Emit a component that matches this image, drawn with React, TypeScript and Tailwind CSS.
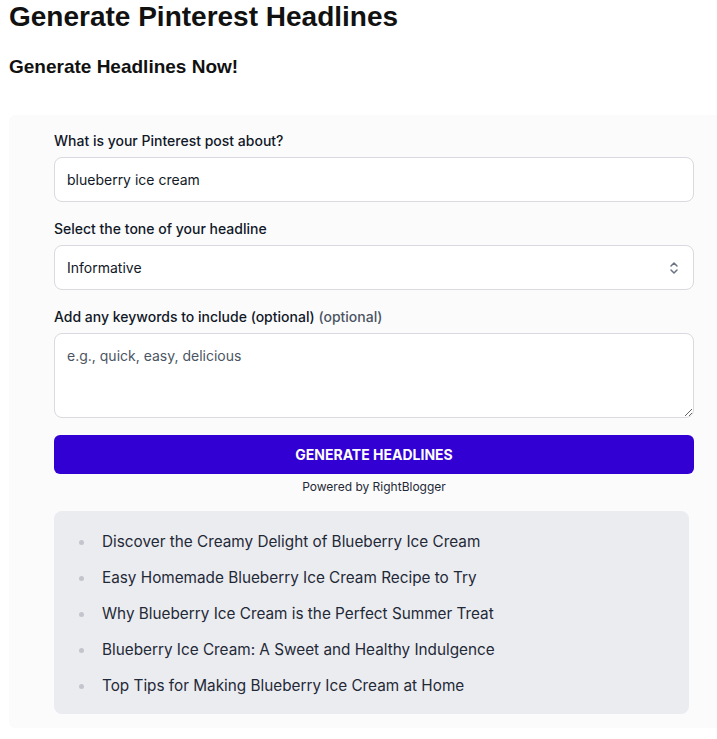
import React from "react";

const items = [
  "Discover the Creamy Delight of Blueberry Ice Cream",
  "Easy Homemade Blueberry Ice Cream Recipe to Try",
  "Why Blueberry Ice Cream is the Perfect Summer Treat",
  "Blueberry Ice Cream: A Sweet and Healthy Indulgence",
  "Top Tips for Making Blueberry Ice Cream at Home",
];

export default function App() {
  return (
    <div className="w-[717px] h-[739px] overflow-hidden bg-white text-[#111827]">
      <h1 className="ml-[9px] pt-[1px] text-[28px] leading-[32px] font-bold text-[#111] [font-family:'Liberation_Sans',Arial,sans-serif]">
        Generate Pinterest Headlines
      </h1>
      <h2 className="ml-[9px] mt-[22px] text-[19px] leading-[24px] font-bold text-[#111] [font-family:'Liberation_Sans',Arial,sans-serif]">
        Generate Headlines Now!
      </h2>
      <div className="ml-[9px] mt-[36px] w-[730px] bg-[#fbfbfc] rounded-[6px] px-[45px] pt-[16px] pb-[14px] [font-family:Inter,'Noto_Sans',sans-serif]">
        <label className="block text-[14px] leading-[20px] font-medium text-[#111827]">
          What is your Pinterest post about?
        </label>
        <div className="mt-[6px] h-[45px] rounded-[8px] border border-[#d9d9df] bg-white flex items-center px-[12px] text-[14px] text-[#111827]">
          blueberry ice cream
        </div>
        <label className="block mt-[17px] text-[14px] leading-[20px] font-medium text-[#111827]">
          Select the tone of your headline
        </label>
        <div className="mt-[6px] h-[45px] rounded-[8px] border border-[#d9d9df] bg-white flex items-center justify-between pl-[12px] pr-[14px] text-[14px] text-[#111827]">
          <span>Informative</span>
          <svg width="10" height="14" viewBox="0 0 10 14" fill="none" stroke="#6b7280" strokeWidth="1.5" strokeLinecap="round" strokeLinejoin="round">
            <path d="M2 5 L5 2 L8 5" />
            <path d="M2 9 L5 12 L8 9" />
          </svg>
        </div>
        <label className="block mt-[17px] text-[14px] leading-[20px] font-medium text-[#111827]">
          Add any keywords to include (optional){" "}
          <span className="text-[#4b5563]">(optional)</span>
        </label>
        <textarea
          className="mt-[6px] block w-full h-[85px] rounded-[8px] border border-[#d9d9df] bg-white px-[12px] py-[12px] text-[14px] leading-[20px] text-[#111827] placeholder:text-[#4b5563] outline-none"
          placeholder="e.g., quick, easy, delicious"
        />
        <button className="mt-[17px] w-full h-[39px] rounded-[6px] bg-[#3300d4] text-white text-[14px] font-bold uppercase">
          Generate Headlines
        </button>
        <div className="mt-[5px] text-center text-[12px] leading-[16px] text-[#1f2937]">
          Powered by RightBlogger
        </div>
        <div className="mt-[16px] w-[635px] rounded-[8px] bg-[#ebecf0] pt-[19px] pb-[16px]">
          <ul className="flex flex-col gap-[12px]">
            {items.map((t) => (
              <li key={t} className="flex items-center text-[15.3px] leading-[24px] text-[#1f2937]">
                <span className="ml-[25px] w-[5px] h-[5px] rounded-full bg-[#c4c5cc]" />
                <span className="ml-[18px]">{t}</span>
              </li>
            ))}
          </ul>
        </div>
      </div>
    </div>
  );
}
